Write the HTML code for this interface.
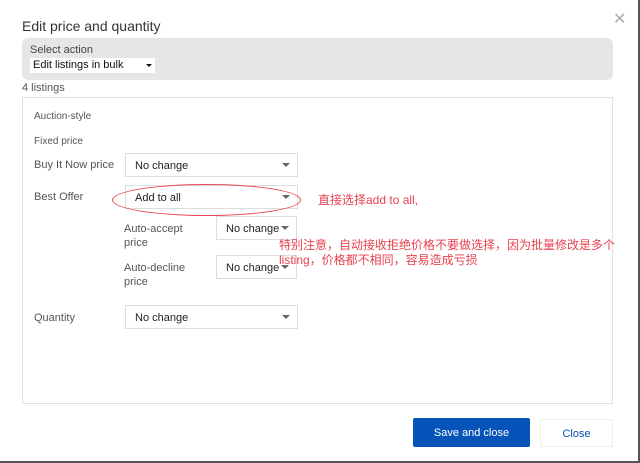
<!DOCTYPE html>
<html><head><meta charset="utf-8"><style>
*{box-sizing:border-box;margin:0;padding:0}
body{width:640px;height:463px;background:#fff;font-family:"Liberation Sans","Noto Sans CJK SC",sans-serif;color:#333;position:relative;overflow:hidden}
.a{position:absolute}
.t{font-size:11px;color:#555}
.sel{position:absolute;border:1px solid #ddd;background:#fff;font-size:11px;color:#222;padding:2px 0 0 9px;display:flex;align-items:center}
.sel:after{content:"";position:absolute;right:7px;top:50%;margin-top:-2px;border-left:4px solid transparent;border-right:4px solid transparent;border-top:4px solid #666}
.red{color:#e8424e;font-size:12px}
</style></head><body>
<div class="a" style="right:0;top:0;width:2px;height:463px;background:#555"></div>
<div class="a" style="left:0;bottom:0;width:640px;height:2px;background:#555"></div>
<div class="a" style="left:22px;top:18px;font-size:14px;color:#333">Edit price and quantity</div>
<div class="a" style="left:613px;top:9px;font-size:16px;color:#aaa">✕</div>
<div class="a" style="left:22px;top:38px;width:591px;height:42px;background:#e6e6e6;border-radius:6px"></div>
<div class="a t" style="left:30px;top:44px;color:#444">Select action</div>
<div class="a" style="left:30px;top:58px;width:125px;height:15px;background:#fff;font-size:11px;color:#111;padding:1px 0 0 3px">Edit listings in bulk</div>
<div class="a" style="left:146px;top:64px;border-left:3px solid transparent;border-right:3px solid transparent;border-top:3px solid #111"></div>
<div class="a t" style="left:22px;top:82px">4 listings</div>
<div class="a" style="left:22px;top:97px;width:591px;height:307px;border:1px solid #e0e0e0"></div>
<div class="a t" style="left:34px;top:111px;font-size:10px">Auction-style</div>
<div class="a t" style="left:34px;top:136px;font-size:10px">Fixed price</div>
<div class="a t" style="left:34px;top:159px">Buy It Now price</div>
<div class="sel" style="left:125px;top:153px;width:173px;height:24px">No change</div>
<div class="a t" style="left:34px;top:191px">Best Offer</div>
<div class="sel" style="left:125px;top:185px;width:173px;height:24px">Add to all</div>
<div class="a" style="left:112px;top:184px;width:189px;height:32px;border:1px solid #e8424e;border-radius:50%"></div>
<div class="a red" style="left:318px;top:191px">直接选择add to all,</div>
<div class="a t" style="left:124px;top:222px;line-height:14px">Auto-accept<br>price</div>
<div class="sel" style="left:216px;top:216px;width:81px;height:24px">No change</div>
<div class="a t" style="left:124px;top:261px;line-height:14px">Auto-decline<br>price</div>
<div class="sel" style="left:216px;top:255px;width:81px;height:24px">No change</div>
<div class="a red" style="left:279px;top:238px;line-height:15px">特别注意，自动接收拒绝价格不要做选择，因为批量修改是多个<br>listing，价格都不相同，容易造成亏损</div>
<div class="a t" style="left:34px;top:312px">Quantity</div>
<div class="sel" style="left:125px;top:305px;width:173px;height:24px">No change</div>
<div class="a" style="left:413px;top:418px;width:117px;height:29px;background:#0654ba;border-radius:2px;color:#fff;font-size:11px;text-align:center;padding-top:9px">Save and close</div>
<div class="a" style="left:540px;top:419px;width:73px;height:28px;border:1px solid #eee;color:#0654ba;font-size:11px;text-align:center;padding-top:8px">Close</div>
</body></html>
